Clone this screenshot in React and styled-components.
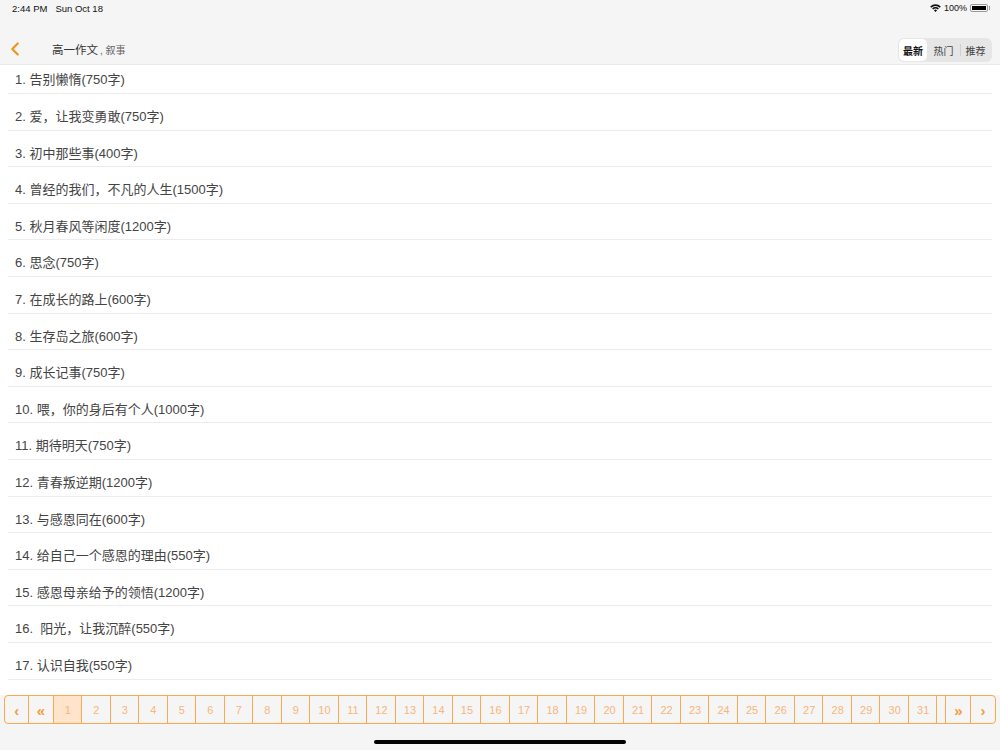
import React from 'react'
import styled, { createGlobalStyle } from 'styled-components'
import { ChevronLeft } from 'lucide-react'

const essays = [
  '告别懒惰(750字)',
  '爱，让我变勇敢(750字)',
  '初中那些事(400字)',
  '曾经的我们，不凡的人生(1500字)',
  '秋月春风等闲度(1200字)',
  '思念(750字)',
  '在成长的路上(600字)',
  '生存岛之旅(600字)',
  '成长记事(750字)',
  '喂，你的身后有个人(1000字)',
  '期待明天(750字)',
  '青春叛逆期(1200字)',
  '与感恩同在(600字)',
  '给自己一个感恩的理由(550字)',
  '感恩母亲给予的领悟(1200字)',
  ' 阳光，让我沉醉(550字)',
  '认识自我(550字)',
]

const pages = Array.from({ length: 31 }, (_, i) => i + 1)

const App = () => (
  <Page>
    <GlobalStyle />
    <StatusBar>
      <StatusLeft>
        <span>2:44 PM</span>
        <span>Sun Oct 18</span>
      </StatusLeft>
      <StatusRight>
        <svg width="11" height="8" viewBox="0 0 11 8">
          <path d="M0.2 2.6A7.4 7.4 0 0 1 10.8 2.6L9.7 3.8A5.8 5.8 0 0 0 1.3 3.8Z" fill="#111" />
          <path d="M2.1 4.5A4.7 4.7 0 0 1 8.9 4.5L7.8 5.6A3.2 3.2 0 0 0 3.2 5.6Z" fill="#111" />
          <path d="M4 6.4A2 2 0 0 1 7 6.4L5.5 8Z" fill="#111" />
        </svg>
        <span>100%</span>
        <Battery>
          <BatteryFill />
        </Battery>
      </StatusRight>
    </StatusBar>
    <NavBar>
      <BackButton>
        <ChevronLeft size={22} strokeWidth={2.4} color="#f5921e" />
      </BackButton>
      <Title>高一作文</Title>
      <SubTitle>, 叙事</SubTitle>
      <Segments>
        <Segment $width={28} $active>最新</Segment>
        <Segment $width={33}>热门</Segment>
        <Segment $width={31} $divider>推荐</Segment>
      </Segments>
    </NavBar>
    <List>
      {essays.map((essay, i) => (
        <Row key={i}>
          <RowText>
            {i + 1}. {essay}
          </RowText>
        </Row>
      ))}
    </List>
    <Pager>
      <PageCell $width={23.5} $arrow>‹</PageCell>
      <PageCell $width={25} $arrow>«</PageCell>
      {pages.map(p => (
        <PageCell key={p} $width={28.53} $active={p === 1}>
          {p}
        </PageCell>
      ))}
      <PageCell $width={8.5} />
      <PageCell $width={25} $arrow>»</PageCell>
      <PageCell $width={23} $arrow $last>›</PageCell>
    </Pager>
    <HomeBar>
      <HomeIndicator />
    </HomeBar>
  </Page>
)

const GlobalStyle = createGlobalStyle`
  html, body {
    margin: 0;
    padding: 0;
    background: #f5f5f5;
  }
`

const Page = styled.div`
  width: 1000px;
  height: 750px;
  overflow: hidden;
  display: flex;
  flex-direction: column;
  background: #f5f5f5;
  color: #333;
  font-family: "Liberation Sans", "Noto Sans CJK SC", sans-serif;
`

const StatusBar = styled.div`
  height: 18px;
  padding: 0 12px 2px;
  box-sizing: border-box;
  display: flex;
  align-items: center;
  justify-content: space-between;
  font-size: 9.5px;
  color: #111;
`

const StatusLeft = styled.div`
  display: flex;
  gap: 8px;
`

const StatusRight = styled.div`
  display: flex;
  align-items: center;
  gap: 3px;
  font-size: 9px;
`

const Battery = styled.div`
  position: relative;
  width: 18px;
  height: 8px;
  padding: 1px;
  box-sizing: border-box;
  border: 1px solid #999;
  border-radius: 2px;

  &:after {
    content: '';
    position: absolute;
    right: -3px;
    top: 1px;
    width: 1px;
    height: 4px;
    background: #999;
  }
`

const BatteryFill = styled.div`
  height: 100%;
  background: #000;
`

const NavBar = styled.div`
  height: 47px;
  padding: 16px 8px 0 4px;
  box-sizing: border-box;
  display: flex;
  align-items: center;
  border-bottom: 1px solid #e8e8e8;
`

const BackButton = styled.div`
  width: 22px;
  height: 22px;
`

const Title = styled.span`
  margin-left: 26px;
  font-size: 11.5px;
  color: #333;
`

const SubTitle = styled.span`
  margin-left: 2px;
  font-size: 10px;
  color: #666;
  white-space: pre;
`

const Segments = styled.div`
  margin-left: auto;
  margin-top: 2px;
  display: flex;
  align-items: center;
  height: 24px;
  padding: 1px;
  box-sizing: border-box;
  border-radius: 6px;
  background: #e6e6e6;
`

const Segment = styled.div`
  position: relative;
  width: ${props => props.$width}px;
  height: 22px;
  display: flex;
  align-items: center;
  justify-content: center;
  font-size: 10px;
  border-radius: 5px;
  color: ${props => (props.$active ? '#111' : '#444')};
  background: ${props => (props.$active ? '#fff' : 'transparent')};
  font-weight: ${props => (props.$active ? 700 : 400)};

  ${props =>
    props.$divider &&
    `&:before {
      content: '';
      position: absolute;
      left: 0;
      top: 5px;
      bottom: 5px;
      width: 1px;
      background: #d0d0d0;
    }`}
`

const List = styled.div`
  height: 630px;
  flex: none;
  padding: 0 8px;
  box-sizing: border-box;
  background: #fff;
`

const Row = styled.div`
  height: 36.6px;
  box-sizing: border-box;
  padding: 7.6px 7px 0;
  display: flex;
  align-items: center;
  border-bottom: 1px solid #ececec;

  &:first-child {
    height: 29px;
    padding-top: 0;
    padding-bottom: 1px;
  }
`

const RowText = styled.span`
  font-size: 13px;
  color: #444;
  white-space: pre;
`

const Pager = styled.div`
  margin: 0 4px;
  height: 29px;
  flex: none;
  display: flex;
  box-sizing: border-box;
  border: 1px solid #ffa850;
  border-radius: 4px;
`

const PageCell = styled.div`
  flex: none;
  width: ${props => props.$width}px;
  box-sizing: border-box;
  padding: 1px 0 0 1px;
  display: flex;
  align-items: center;
  justify-content: center;
  font-size: ${props => (props.$arrow ? '15px' : '11px')};
  font-weight: ${props => (props.$arrow ? 700 : 400)};
  color: ${props => (props.$arrow ? '#f79a3c' : '#f8b67a')};
  background: ${props => (props.$active ? '#fde4cb' : 'transparent')};
  border-right: ${props => (props.$last ? 'none' : '1px solid #ffa850')};
`

const HomeBar = styled.div`
  flex: 1;
  display: flex;
  justify-content: center;
  padding-top: 16px;
`

const HomeIndicator = styled.div`
  width: 252px;
  height: 4px;
  border-radius: 2px;
  background: #000;
`

export default App
